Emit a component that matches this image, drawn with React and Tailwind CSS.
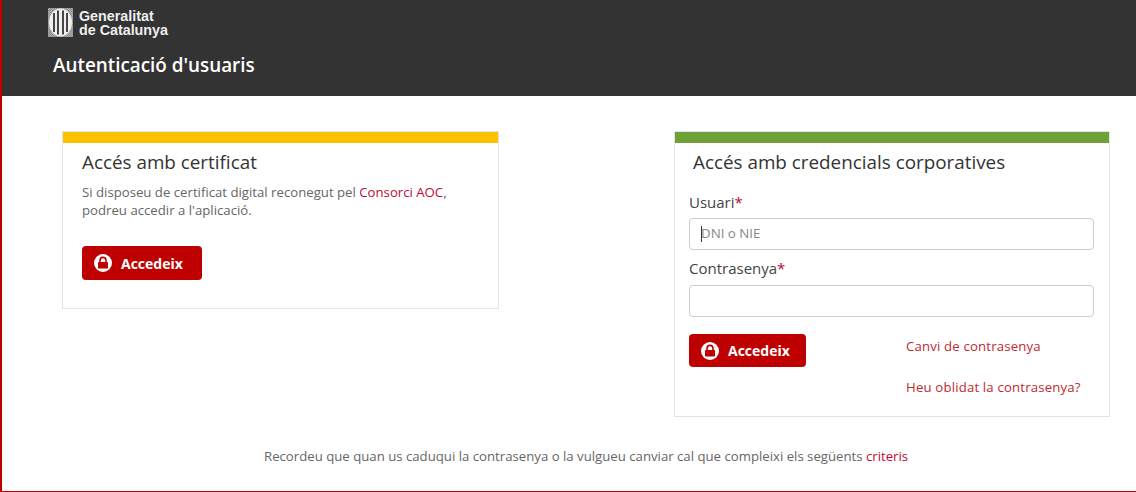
import { useId } from "react";

function LockCircle() {
  return (
    <svg width="18" height="18" viewBox="0 0 18 18" className="shrink-0">
      <circle cx="9" cy="9" r="9" fill="#fff" />
      <rect x="4" y="8" width="10" height="6.5" rx="0.8" fill="#bf0000" />
      <path d="M6 8V6.4a3 3 0 0 1 6 0V8" fill="none" stroke="#bf0000" strokeWidth="1.6" />
    </svg>
  );
}

function Shield() {
  const id = useId();
  return (
    <svg width="25" height="29" viewBox="0 0 25 29" className="shrink-0">
      <defs>
        <pattern id={id} width="2" height="2" patternUnits="userSpaceOnUse">
          <rect width="2" height="2" fill="#888" />
          <path d="M0 2L2 0" stroke="#ccc" strokeWidth="0.6" />
        </pattern>
      </defs>
      <rect width="25" height="29" fill={`url(#${id})`} />
      <ellipse cx="12.5" cy="14.5" rx="11.5" ry="14" fill="#eee" />
      <path d="M6 5v19M10 2.5v24M15 2.5v24M19 5v19" stroke="#333" strokeWidth="1.8" />
    </svg>
  );
}

function LoginButton({ className }) {
  return (
    <button className={`flex items-center gap-[9px] rounded-[4px] bg-[#bf0000] pl-3 text-[14px] font-bold text-white ${className}`}>
      <LockCircle />
      Accedeix
    </button>
  );
}

export default function App() {
  return (
    <div className="h-[492px] overflow-hidden border-b border-l-2 border-[#bf0000] bg-white font-['Open_Sans',sans-serif] text-[#666]">
      {/* Header */}
      <header className="h-[96px] bg-[#333333] pl-[46px] pt-2 text-white">
        <div className="flex items-center gap-[6px]">
          <Shield />
          <div className="font-['Liberation_Sans',sans-serif] text-[14.3px] font-bold leading-[14px] text-[#eee]">
            <div>Generalitat</div>
            <div>de Catalunya</div>
          </div>
        </div>
        <h1 className="mt-[15px] pl-[5px] text-[18.85px] font-semibold leading-[26px]">Autenticació d'usuaris</h1>
      </header>

      {/* Cards */}
      <main className="flex items-start justify-between pl-[60px] pr-[26px] pt-[35px]">
        <section className="h-[178px] w-[437px] border border-[#e4e4e4]">
          <div className="h-[11px] bg-[#ffc000]" />
          <div className="pl-[19px]">
            <h2 className="mt-[6px] text-[18.85px] leading-[26px] text-[#333]">Accés amb certificat</h2>
            <p className="mt-[8px] text-[13.2px] leading-[18px]">
              Si disposeu de certificat digital reconegut pel <a className="text-[#bf0a30]">Consorci AOC</a>,<br />
              podreu accedir a l'aplicació.
            </p>
            <LoginButton className="mt-[27px] h-[34px] w-[120px]" />
          </div>
        </section>

        <section className="h-[286px] w-[436px] border border-[#e4e4e4]">
          <div className="h-[11px] bg-[#70a136]" />
          <div className="pl-[14px] pr-[15px]">
            <h2 className="ml-[4px] mt-[6px] text-[18.85px] leading-[26px] text-[#333]">Accés amb credencials corporatives</h2>
            <label className="mt-[17px] block text-[15px] leading-[20px] text-[#444]">
              Usuari<span className="text-[#bf0a30]">*</span>
            </label>
            <div className="mt-[6px] flex h-[32px] items-center rounded-[4px] border border-[#ccc] pl-[11px] text-[13.3px] text-[#888]">
              <span className="h-[16px] w-px bg-[#333]" />
              <span className="-ml-px">DNI o NIE</span>
            </div>
            <label className="mt-[8px] block text-[15px] leading-[20px] text-[#444]">
              Contrasenya<span className="text-[#bf0a30]">*</span>
            </label>
            <div className="mt-[7px] h-[32px] rounded-[4px] border border-[#ccc]" />
            <div className="mt-[17px] flex items-start">
              <LoginButton className="h-[33px] w-[117px]" />
              <div className="ml-[100px] pt-[3px] text-[13.2px] text-[#bf2a30]">
                <a className="block leading-[18px] tracking-[0.17px]">Canvi de contrasenya</a>
                <a className="mt-[23px] block leading-[18px] tracking-[0.17px]">Heu oblidat la contrasenya?</a>
              </div>
            </div>
          </div>
        </section>
      </main>

      <p className="mt-[30px] pl-[262px] text-[13.2px] leading-[18px] text-[#666]">
        Recordeu que quan us caduqui la contrasenya o la vulgueu canviar cal que compleixi els següents <a className="text-[#bf0a30]">criteris</a>
      </p>
    </div>
  );
}
